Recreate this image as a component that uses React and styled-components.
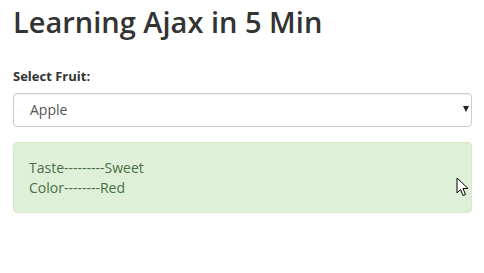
import React from "react";
import styled, { createGlobalStyle } from "styled-components";

const GlobalStyle = createGlobalStyle`
  html, body {
    margin: 0;
    padding: 0;
    background: #fff;
  }
  body {
    font-family: "Open Sans", "Noto Sans", sans-serif;
    font-size: 14px;
    line-height: 20px;
    color: #333;
  }
`;

const Page = styled.div`
  position: relative;
  padding: 5px 12px 40px 13px;
`;

const Title = styled.h2`
  margin: 0 0 28px;
  font-size: 29px;
  font-weight: 600;
  line-height: 33px;
  color: #333;
`;

const Label = styled.label`
  display: block;
  font-weight: 700;
  font-size: 13px;
  margin-bottom: 7px;
`;

const SelectBox = styled.div`
  position: relative;
  height: 34px;
  box-sizing: border-box;
  border: 1px solid #ccc;
  border-radius: 4px;
  box-shadow: inset 0 1px 1px rgba(0, 0, 0, 0.075);
  display: flex;
  align-items: center;
  padding: 0 16px;
  color: #555;
  font-size: 14px;
  margin-bottom: 15px;
`;

const Caret = styled.span`
  position: absolute;
  right: 2px;
  top: 12px;
  width: 0;
  height: 0;
  border-left: 3px solid transparent;
  border-right: 3px solid transparent;
  border-top: 6px solid #222;
`;

const Alert = styled.div`
  background: #dff0d8;
  border: 1px solid #d6e9c6;
  border-radius: 4px;
  color: #4a6e45;
  padding: 15px;
  box-sizing: border-box;
  height: 71px;
  display: flex;
  flex-direction: column;
  justify-content: center;
`;

const Line = styled.div`
  line-height: 20px;
`;

const Cursor = styled.svg`
  position: absolute;
  left: 456px;
  top: 177px;
`;

export default function App() {
  return (
    <>
      <GlobalStyle />
      <Page>
        <Title>Learning Ajax in 5 Min</Title>
        <Label>Select Fruit:</Label>
        <SelectBox>
          Apple
          <Caret />
        </SelectBox>
        <Alert>
          <Line>Taste---------Sweet</Line>
          <Line>Color--------Red</Line>
        </Alert>
        <Cursor width="14" height="21" viewBox="0 0 14 21">
          <path
            d="M1 1 L1 16 L4.5 12.5 L7 18.5 L9.5 17.5 L7 11.5 L12 11.5 Z"
            fill="#fff"
            stroke="#000"
            strokeWidth="1"
            strokeLinejoin="miter"
          />
        </Cursor>
      </Page>
    </>
  );
}
